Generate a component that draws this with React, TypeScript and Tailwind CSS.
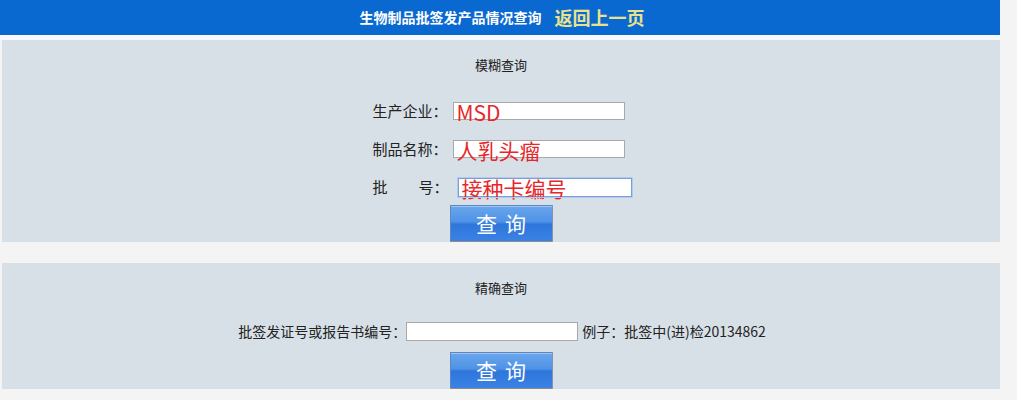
import React from "react";

const cjk = "font-['Microsoft_YaHei','Noto_Sans_CJK_SC',sans-serif]";

function QueryButton() {
  return (
    <button
      type="button"
      className={`${cjk} w-[103px] h-[37px] border border-[#5d86c4] border-b-[#8c8c8c] border-r-[#7f93b3] rounded-[1px] bg-[linear-gradient(to_bottom,#6aa6ec_0%,#4f92e6_45%,#2f76dc_52%,#3a82e4_100%)] text-white text-[21px] leading-none tracking-[8px] pl-[8px] shadow-[inset_0_1px_0_rgba(255,255,255,0.35)]`}
    >
      查询
    </button>
  );
}

function Field({ label, value, focused }: { label: React.ReactNode; value: string; focused?: boolean }) {
  return (
    <div className="flex items-center h-[18px]">
      <div className="w-[80px] text-[15px] leading-[18px] text-[#222] flex justify-between pr-[4px]">{label}</div>
      <div
        className={
          focused
            ? "ml-[5px] w-[174px] h-[19px] bg-white border border-[#7a9ed8] outline outline-1 outline-[#b5cbeb] px-[3px] flex items-center"
            : "w-[172px] h-[18px] bg-white border border-[#a9a9a9] px-[3px] flex items-center"
        }
      >
        <span className="text-[21px] leading-[18px] pt-[2px] text-[#e8262a] whitespace-nowrap">{value}</span>
      </div>
    </div>
  );
}

export default function App() {
  return (
    <div className={`${cjk} w-full h-[400px] bg-[#f4f4f4] overflow-hidden`}>
      <div className="w-[1000px]">
        <div className="h-[35px] bg-[#0a69d1] flex items-center justify-center gap-[13px] pl-[4px]">
          <span className="text-white text-[14px] font-bold">生物制品批签发产品情况查询</span>
          <span className="text-[#e9e28c] text-[18px] font-bold">返回上一页</span>
        </div>
        <div className="h-[5px] bg-[#f7fafc]" />

        <div className="ml-[2px] w-[998px] h-[202px] bg-[#d8e0e7] flex flex-col items-center pt-[15px]">
          <div className="text-[13px] text-[#222] leading-[20px]">模糊查询</div>
          <div className="mt-[27px] flex flex-col gap-[20px] pl-[2px]">
            <Field label="生产企业：" value="MSD" />
            <Field label="制品名称：" value="人乳头瘤" />
            <Field
              label={
                <>
                  <span>批</span>
                  <span>号：</span>
                </>
              }
              value="接种卡编号"
              focused
            />
          </div>
          <div className="mt-[9px]">
            <QueryButton />
          </div>
        </div>

        <div className="mt-[21px] ml-[2px] w-[998px] h-[126px] bg-[#d8e0e7] flex flex-col items-center pt-[15px]">
          <div className="text-[13px] text-[#222] leading-[20px]">精确查询</div>
          <div className="mt-[24px] flex items-center h-[19px] text-[14px] leading-[19px] text-[#222] pl-[2px]">
            <span>批签发证号或报告书编号：</span>
            <input readOnly className="w-[172px] h-[19px] bg-white border border-[#a9a9a9]" />
            <span className="ml-[4px]">例子：批签中(进)检20134862</span>
          </div>
          <div className="mt-[11px]">
            <QueryButton />
          </div>
        </div>
      </div>
    </div>
  );
}
